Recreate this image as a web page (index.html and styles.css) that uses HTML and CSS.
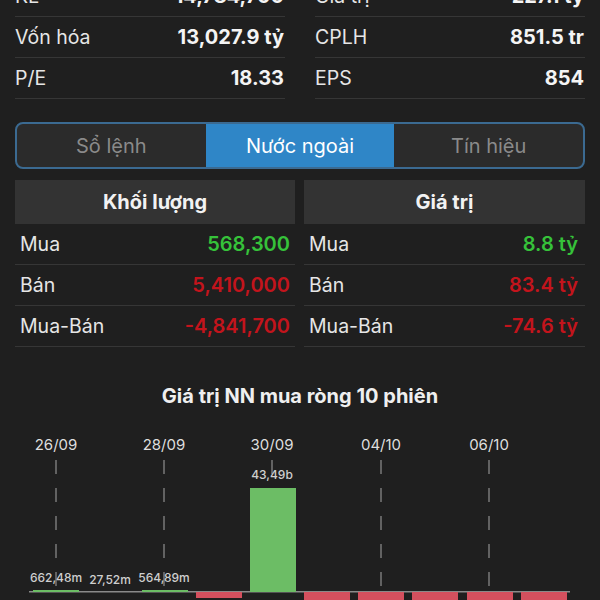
FILE: index.html
```html
<!DOCTYPE html>
<html lang="vi">
<head>
<meta charset="utf-8">
<link rel="stylesheet" href="styles.css">
</head>
<body>
<div class="page">
  <div class="stats">
    <div class="col">
      <div class="row"><span class="lbl">KL</span><span class="val">14,784,700</span></div>
      <div class="row"><span class="lbl">Vốn hóa</span><span class="val">13,027.9 tỷ</span></div>
      <div class="row"><span class="lbl">P/E</span><span class="val">18.33</span></div>
    </div>
    <div class="col">
      <div class="row"><span class="lbl">Giá trị</span><span class="val">227.1 tỷ</span></div>
      <div class="row"><span class="lbl">CPLH</span><span class="val">851.5 tr</span></div>
      <div class="row"><span class="lbl">EPS</span><span class="val">854</span></div>
    </div>
  </div>

  <div class="tabs">
    <div class="tab">Sổ lệnh</div>
    <div class="tab active">Nước ngoài</div>
    <div class="tab">Tín hiệu</div>
  </div>

  <div class="tables">
    <div class="tbl left">
      <div class="th">Khối lượng</div>
      <div class="tr"><span>Mua</span><span class="up">568,300</span></div>
      <div class="tr"><span>Bán</span><span class="down">5,410,000</span></div>
      <div class="tr"><span>Mua-Bán</span><span class="down">-4,841,700</span></div>
    </div>
    <div class="tbl right">
      <div class="th">Giá trị</div>
      <div class="tr"><span>Mua</span><span class="up">8.8 tỷ</span></div>
      <div class="tr"><span>Bán</span><span class="down">83.4 tỷ</span></div>
      <div class="tr"><span>Mua-Bán</span><span class="down">-74.6 tỷ</span></div>
    </div>
  </div>

  <h2 class="chart-title">Giá trị NN mua ròng 10 phiên</h2>

  <svg class="chart" width="570" height="190" viewBox="0 0 570 190">
    <g class="grid">
      <line x1="41" y1="40" x2="41" y2="172"/>
      <line x1="149" y1="40" x2="149" y2="172"/>
      <line x1="257" y1="40" x2="257" y2="172"/>
      <line x1="366" y1="40" x2="366" y2="172"/>
      <line x1="474" y1="40" x2="474" y2="172"/>
    </g>
    <g class="dates">
      <text x="41" y="30">26/09</text>
      <text x="149" y="30">28/09</text>
      <text x="257" y="30">30/09</text>
      <text x="366" y="30">04/10</text>
      <text x="474" y="30">06/10</text>
    </g>
    <rect class="axis" x="14" y="171" width="541" height="1.5"/>
    <rect class="pos" x="18" y="170" width="46" height="2"/>
    <rect class="pos" x="127" y="170" width="46" height="2"/>
    <rect class="neg" x="181" y="172" width="46" height="6"/>
    <rect class="pos" x="235" y="68" width="46" height="104"/>
    <rect class="neg" x="289" y="172" width="46" height="20"/>
    <rect class="neg" x="343" y="172" width="46" height="20"/>
    <rect class="neg" x="397" y="172" width="46" height="20"/>
    <rect class="neg" x="452" y="172" width="46" height="20"/>
    <rect class="neg" x="506" y="172" width="46" height="20"/>
    <g class="vals">
      <text x="41" y="162">662,48m</text>
      <text x="95" y="164">27,52m</text>
      <text x="149" y="162">564,89m</text>
      <text x="257" y="59">43,49b</text>
    </g>
  </svg>
</div>
</body>
</html>
```

FILE: styles.css
```css
* { box-sizing: border-box; }
html, body {
  margin: 0;
  padding: 0;
  background: #1f1f1f;
  overflow: hidden;
}
body {
  font-family: Inter, "Noto Sans", "DejaVu Sans", sans-serif;
  color: #ececec;
}
.page {
  padding: 0 15px;
}
.stats {
  display: grid;
  grid-template-columns: 270px 270px;
  column-gap: 30px;
  margin-top: -24px;
}
.row {
  display: flex;
  justify-content: space-between;
  align-items: center;
  height: 41px;
  border-bottom: 1px solid #363636;
  font-size: 19.5px;
}
.row .lbl { color: #e6e6e6; }
.row .val { font-weight: 700; font-size: 20px; color: #f4f4f4; padding-right: 1px; }

.tabs {
  margin-top: 23px;
  height: 47px;
  display: flex;
  border: 2px solid #3b6a91;
  border-radius: 8px;
  overflow: hidden;
  background: #2b2b2b;
}
.tab {
  flex: 1;
  display: flex;
  align-items: center;
  justify-content: center;
  font-size: 20px;
  color: #8a8a8a;
}
.tab.active {
  background: #2f86c7;
  color: #ffffff;
}

.tables {
  margin-top: 11px;
  display: grid;
  grid-template-columns: 280px 281px;
  column-gap: 9px;
}
.th {
  height: 44px;
  background: #333333;
  display: flex;
  align-items: center;
  justify-content: center;
  font-size: 20px;
  font-weight: 700;
  color: #f2f2f2;
}
.tr {
  height: 41px;
  display: flex;
  justify-content: space-between;
  align-items: center;
  padding: 0 5px;
  border-bottom: 1px solid #363636;
  font-size: 19.5px;
  color: #e6e6e6;
}
.right .tr { padding-right: 7px; }
.up { color: #36c23a; font-weight: 600; font-size: 20px; }
.down { color: #c3141c; font-weight: 600; font-size: 20px; }

.chart-title {
  margin: 37px 0 12px;
  height: 24px;
  line-height: 24px;
  text-align: center;
  font-size: 20px;
  font-weight: 700;
  color: #efefef;
}
.chart {
  display: block;
  overflow: visible;
}
.grid line {
  stroke: #7a7a7a;
  stroke-width: 1.5;
  stroke-dasharray: 14 14;
}
.dates text {
  font-family: Inter, "Noto Sans", sans-serif;
  font-size: 15px;
  fill: #dedede;
  text-anchor: middle;
}
.vals text {
  font-family: Inter, "Noto Sans", sans-serif;
  font-size: 12px;
  font-weight: 500;
  fill: #cfcfcf;
  text-anchor: middle;
}
.axis { fill: #8a8a8a; }
.pos { fill: #6cbd65; }
.neg { fill: #d4505e; }
```
